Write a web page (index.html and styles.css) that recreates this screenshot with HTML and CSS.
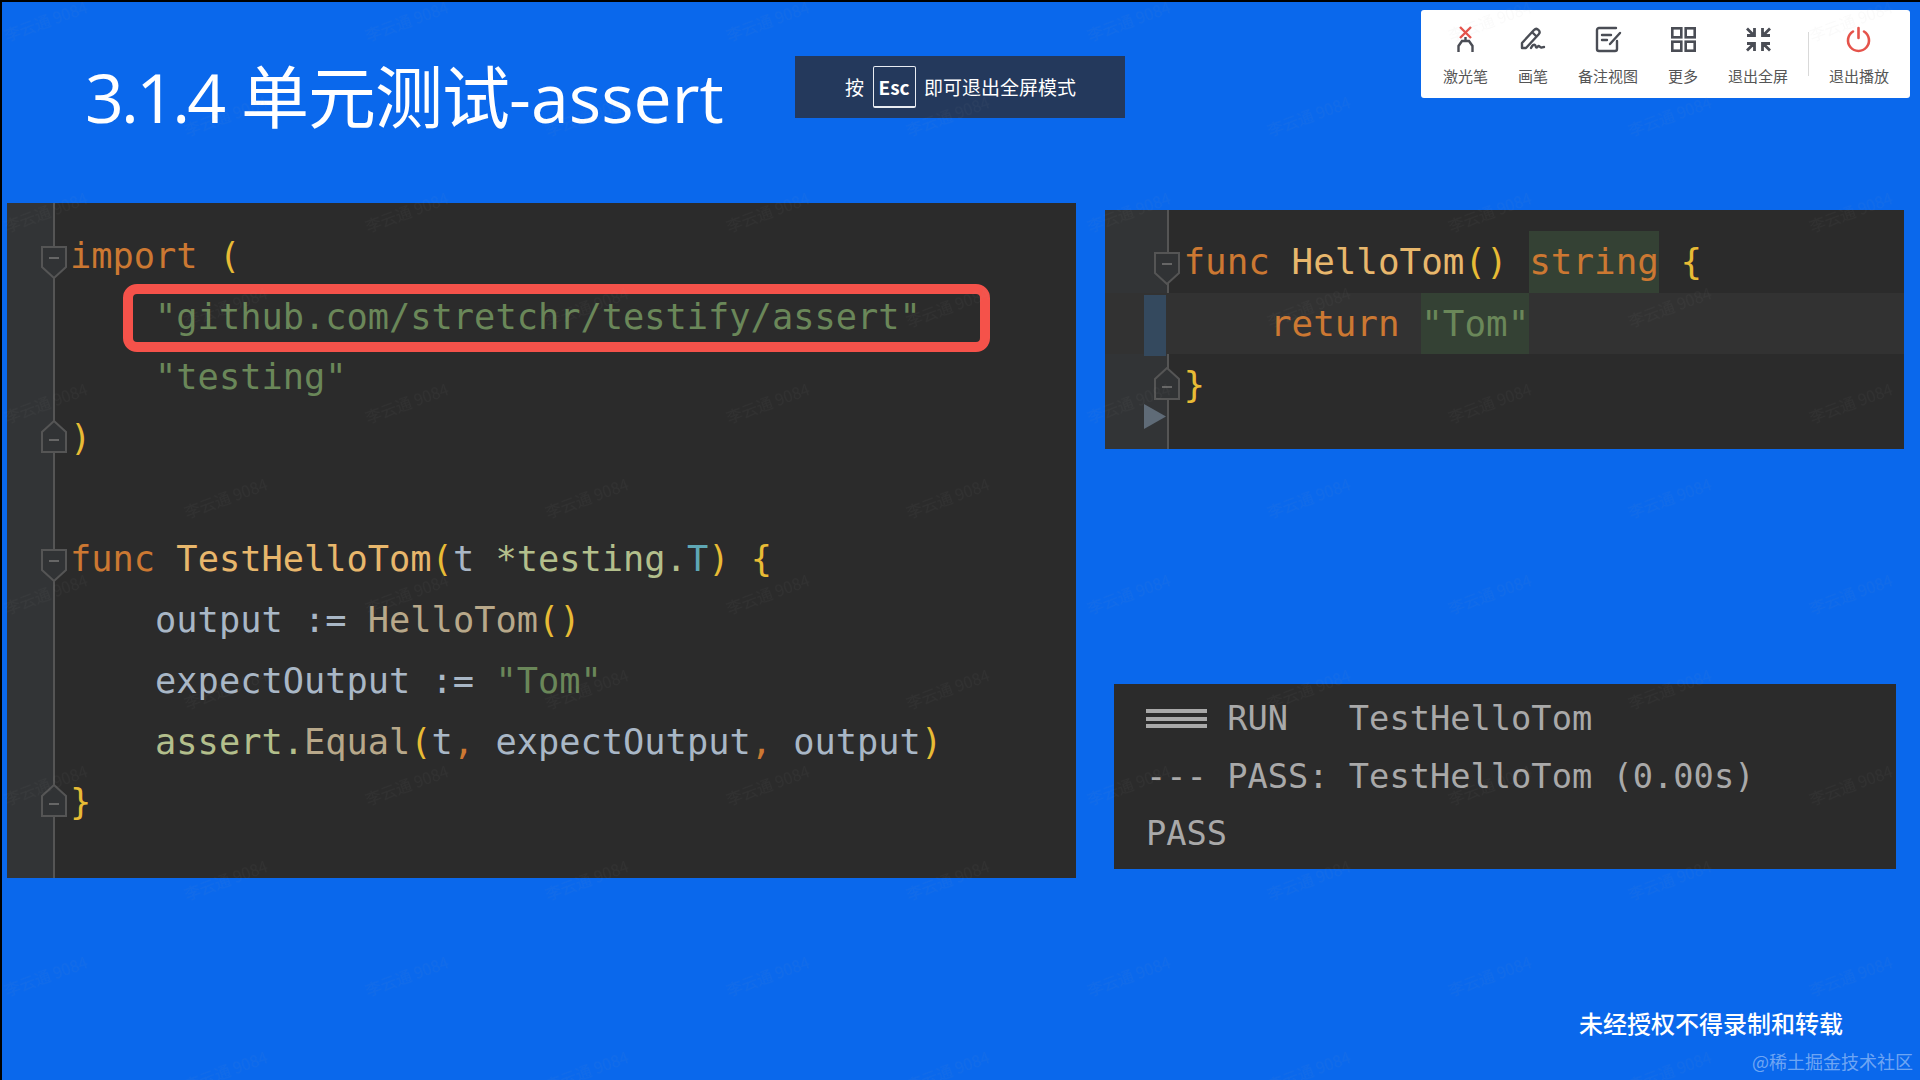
FILE: index.html
```html
<!DOCTYPE html>
<html lang="zh-CN">
<head>
<meta charset="utf-8">
<title>3.1.4 单元测试-assert</title>
<link rel="stylesheet" href="styles.css">
</head>
<body>
<main class="slide">
  <header class="top">
    <h1 class="title"><span class="t-num">3.1.4</span> <span class="t-cjk">单元测试</span><span class="t-lat">-assert</span></h1>
    <div class="esc-hint"><span>按</span><kbd class="key">Esc</kbd><span>即可退出全屏模式</span></div>
    <nav class="toolbar">
      <div class="tool">
        <svg class="icon" viewBox="0 0 25 25" fill="none"><path d="M7 0l11 11M18 0L7 11" stroke="#e5534b" stroke-width="2.400"/><path d="M5.500 25v-6l3.500-5h7l3.500 5v6M12.500 10v4" stroke="#4a4d55" stroke-width="2.400"/></svg>
        <span class="label">激光笔</span>
      </div>
      <div class="tool">
        <svg class="icon" viewBox="0 0 25 25" fill="none" stroke="#4a4d55" stroke-width="2.400" stroke-linejoin="round" stroke-linecap="round"><path d="M1 21V16L13 3c1.500-1.500 3-1.500 4.500 0 1.500 1.500 1.500 3 0 4.500L5 21H1zM11 5l4.500 4.500M10 21c1.500-3 3-4 4-3s.5 2.500 1.500 2.500 1.500-2 2.500-1.500 1 1.500 2 1.500 1.500-.5 3-.5"/></svg>
        <span class="label">画笔</span>
      </div>
      <div class="tool">
        <svg class="icon" viewBox="0 0 25 25" fill="none" stroke="#4a4d55" stroke-width="2.400" stroke-linejoin="round" stroke-linecap="round"><path d="M20 1H3C2 1 1 2 1 3v19c0 1 1 2 2 2h16c1 0 2-1 2-2V14M6 8h9M6 13h5M14 17L24 6"/></svg>
        <span class="label">备注视图</span>
      </div>
      <div class="tool">
        <svg class="icon" viewBox="0 0 25 25" fill="none" stroke="#4a4d55" stroke-width="2.600"><rect x="1.300" y="1.300" width="9" height="9"/><rect x="14.700" y="1.300" width="9" height="9"/><rect x="1.300" y="14.700" width="9" height="9"/><rect x="14.700" y="14.700" width="9" height="9"/></svg>
        <span class="label">更多</span>
      </div>
      <div class="tool">
        <svg class="icon" viewBox="0 0 25 25" fill="none" stroke="#4a4d55" stroke-width="2.800"><path d="M1 1.500l6.500 6.500M1 8.500h7.500v-7.500M24 1.500L17.500 8M24 8.500h-7.500v-7.500M1 23.500L7.500 17M1 16.500h7.500v7.500M24 23.500L17.500 17M24 16.500h-7.500v7.500"/></svg>
        <span class="label">退出全屏</span>
      </div>
      <div class="divider"></div>
      <div class="tool">
        <svg class="icon" viewBox="0 0 25 25" fill="none" stroke="#e5534b" stroke-width="2.600" stroke-linecap="round"><path d="M12.500 1v10M7 4.500a10.500 10.500 0 1 0 11 0"/></svg>
        <span class="label">退出播放</span>
      </div>
    </nav>
  </header>

  <section class="main">
    <div class="panel code-left">
      <div class="hl-box"></div>
      <div class="line"><span class="slot"><svg class="fold fold-open" viewBox="0 0 26 33"><path class="fold-shape" d="M1 1h24v20L13 32 1 21z"/><path class="fold-mark" d="M8 12h10"/></svg></span><span class="kw">import</span> <span class="par">(</span></div>
      <div class="line"><span class="slot"></span>    <span class="str">"github.com/stretchr/testify/assert"</span></div>
      <div class="line"><span class="slot"></span>    <span class="str">"testing"</span></div>
      <div class="line"><span class="slot"><svg class="fold fold-close" viewBox="0 0 26 33"><path class="fold-shape" d="M1 32h24V12L13 1 1 12z"/><path class="fold-mark" d="M8 20h10"/></svg></span><span class="par">)</span></div>
      <div class="line"></div>
      <div class="line"><span class="slot"><svg class="fold fold-open" viewBox="0 0 26 33"><path class="fold-shape" d="M1 1h24v20L13 32 1 21z"/><path class="fold-mark" d="M8 12h10"/></svg></span><span class="kw">func</span> <span class="fn">TestHelloTom</span><span class="par">(</span><span class="var">t</span> <span class="pkg">*testing.</span><span class="type">T</span><span class="par">)</span> <span class="par">{</span></div>
      <div class="line"><span class="slot"></span>    <span class="var">output</span> <span class="var">:=</span> <span class="call">HelloTom</span><span class="par">()</span></div>
      <div class="line"><span class="slot"></span>    <span class="var">expectOutput</span> <span class="var">:=</span> <span class="str">"Tom"</span></div>
      <div class="line"><span class="slot"></span>    <span class="pkg">assert.</span><span class="call">Equal</span><span class="par">(</span><span class="var">t</span><span class="kw">,</span> <span class="var">expectOutput</span><span class="kw">,</span> <span class="var">output</span><span class="par">)</span></div>
      <div class="line"><span class="slot"><svg class="fold fold-close" viewBox="0 0 26 33"><path class="fold-shape" d="M1 32h24V12L13 1 1 12z"/><path class="fold-mark" d="M8 20h10"/></svg></span><span class="par">}</span></div>
    </div>

    <div class="right">
      <div class="panel code-right">
        <div class="line"><span class="slot"><svg class="fold fold-open" viewBox="0 0 26 33"><path class="fold-shape" d="M1 1h24v20L13 32 1 21z"/><path class="fold-mark" d="M8 12h10"/></svg></span><span class="kw">func</span> <span class="fn">HelloTom</span><span class="par">()</span> <span class="kw mark">string</span> <span class="par">{</span></div>
        <div class="line current"><span class="slot"><i class="change"></i></span>    <span class="kw">return</span> <span class="str mark">"Tom"</span></div>
        <div class="line"><span class="slot"><svg class="fold fold-close" viewBox="0 0 26 33"><path class="fold-shape" d="M1 32h24V12L13 1 1 12z"/><path class="fold-mark" d="M8 20h10"/></svg></span><span class="par">}</span></div>
        <svg class="run" viewBox="0 0 22 25"><path d="M0 0l22 12.500L0 25z"/></svg>
      </div>
      <div class="panel result">
        <div class="out"><span class="bars">===</span> RUN   TestHelloTom</div>
        <div class="out">--- PASS: TestHelloTom (0.00s)</div>
        <div class="out">PASS</div>
      </div>
    </div>
  </section>

  <footer class="foot">
    <div class="notice">未经授权不得录制和转载</div>
    <div class="credit">@稀土掘金技术社区</div>
  </footer>

  <svg class="watermarks" width="1918" height="1078">
    <defs>
      <pattern id="wm" width="361" height="191" patternUnits="userSpaceOnUse">
        <text class="wm-text" transform="translate(5 40) rotate(-20)">李云通 9084</text>
        <text class="wm-text" transform="translate(185 135) rotate(-20)">李云通 9084</text>
      </pattern>
    </defs>
    <rect width="1918" height="1078" fill="url(#wm)"/>
  </svg>
</main>
</body>
</html>
```
FILE: styles.css
```css
* { box-sizing: border-box; }
html, body { margin: 0; height: 100%; background: #000; overflow: hidden; }
.slide {
  position: relative;
  width: 1918px;
  height: 1078px;
  margin: 2px 0 0 2px;
  background: #0a68ec;
  font-family: "Noto Sans CJK SC", sans-serif;
  display: flex;
  flex-direction: column;
}
.top { display: flex; align-items: flex-start; height: 201px; padding-top: 8px; }
.title {
  width: 710px;
  margin: 41px 0 0 83px;
  font-family: "Open Sans", "Noto Sans CJK SC", sans-serif;
  font-weight: 400;
  font-size: 68px;
  line-height: 92px;
  color: #fff;
  white-space: nowrap;
}
.t-num { letter-spacing: -2.800px; }
.t-cjk { letter-spacing: -1px; }
.esc-hint {
  display: flex;
  align-items: center;
  width: 330px;
  height: 62px;
  margin-top: 46px;
  padding-left: 50px;
  padding-bottom: 1px;
  gap: 8.500px;
  background: #24395c;
  color: #fff;
  font-size: 19px;
  white-space: nowrap;
}
.key {
  display: flex;
  align-items: center;
  justify-content: center;
  width: 43px;
  height: 42px;
  border: 1px solid #e8ecf2;
  border-bottom-width: 2px;
  border-radius: 2px;
  font-family: "Noto Sans CJK SC", sans-serif;
  font-weight: 700;
  font-size: 19px;
}
.toolbar {
  display: flex;
  align-items: flex-start;
  gap: 30px;
  width: 489px;
  height: 88px;
  margin-left: auto;
  margin-right: 10px;
  padding: 17px 21px 0 22px;
  background: #fff;
  border-radius: 3px;
}
.tool { display: flex; flex-direction: column; align-items: center; height: 65px; }
.icon { display: block; width: 25px; height: 25px; overflow: visible; }
.label { margin-top: 14px; font-size: 15px; line-height: 20px; color: #555; white-space: nowrap; }
.divider { width: 1px; height: 44px; margin: 5px -10px 0 -10px; background: #d9d9d9; }

.main { display: flex; align-items: flex-start; padding-left: 5px; height: 675px; }
.panel { position: relative; background: #2b2b2b; }
.code-left,
.code-right {
  font-family: "DejaVu Sans Mono", monospace;
  background: linear-gradient(90deg, #323436 0, #323436 46px, #555 46px, #555 48px, #2b2b2b 48px);
}
.code-left { width: 1069px; height: 675px; padding-top: 23px; font-size: 35.350px; }
.right { display: flex; flex-direction: column; margin-left: 29px; }
.code-right { width: 799px; height: 239px; margin-top: 7px; padding-top: 21px; font-size: 35.900px; background: linear-gradient(90deg, #323436 0, #323436 62px, #555 62px, #555 64px, #2b2b2b 64px); }

.line { display: block; height: 60.700px; line-height: 60.700px; white-space: pre; }
.code-right .line { height: 61.500px; line-height: 61.500px; }
.slot { display: inline-flex; align-items: center; width: 63px; height: 33px; padding-left: 34px; vertical-align: middle; }
.code-right .slot { width: 78.500px; padding-left: 49px; }
.fold { display: block; flex: none; width: 26px; height: 33px; }
.fold-open { transform: translateY(4px); }
.fold-close { transform: translateY(-4px); }
.fold-shape { fill: #313335; stroke: #555; stroke-width: 2; }
.fold-mark { stroke: #666; stroke-width: 2; }
.kw { color: #cc7832; }
.fn { color: #e8b76c; }
.par { color: #e8bb35; }
.str { color: #6a8759; }
.var { color: #a9b7c6; }
.pkg { color: #b3bf8c; }
.type { color: #5fa7b5; }
.call { color: #b8a88a; }
.current { background: #323232; }
.mark { display: inline-block; height: 100%; vertical-align: top; background: #344134; }
.change { position: absolute; left: 39px; width: 22px; height: 61.500px; background: #34495e; }
.run { position: absolute; left: 39px; top: 194px; width: 22px; height: 25px; fill: #5f6b77; }
.hl-box {
  position: absolute;
  left: 116px;
  top: 81px;
  width: 867px;
  height: 68px;
  border: 10px solid #f5524a;
  border-radius: 14px;
}
.result {
  width: 782px;
  height: 185px;
  margin: 235px 0 0 9px;
  padding: 6px 0 0 32px;
  font-family: "DejaVu Sans Mono", monospace;
  font-size: 33.700px;
  color: #a9a9a9;
}
.out { height: 57.500px; line-height: 57.500px; white-space: pre; }
.bars {
  color: transparent;
  background: repeating-linear-gradient(180deg, #a9a9a9 0, #a9a9a9 4px, transparent 4px, transparent 7.500px) 0 50% / 100% 19px no-repeat;
}
.foot { display: flex; flex-direction: column; align-items: flex-end; flex: 1; }
.notice { margin: 127px 77px 0 0; font-size: 24px; font-weight: 500; line-height: 36px; color: #fff; white-space: nowrap; }
.credit { margin: 7px 7px 0 0; font-size: 18px; line-height: 26px; color: rgba(255, 255, 255, .42); white-space: nowrap; }
.watermarks { position: absolute; left: 0; top: 0; pointer-events: none; }
.wm-text { font-family: "Noto Sans CJK SC", sans-serif; font-size: 16px; fill: #999; fill-opacity: .05; }
```
